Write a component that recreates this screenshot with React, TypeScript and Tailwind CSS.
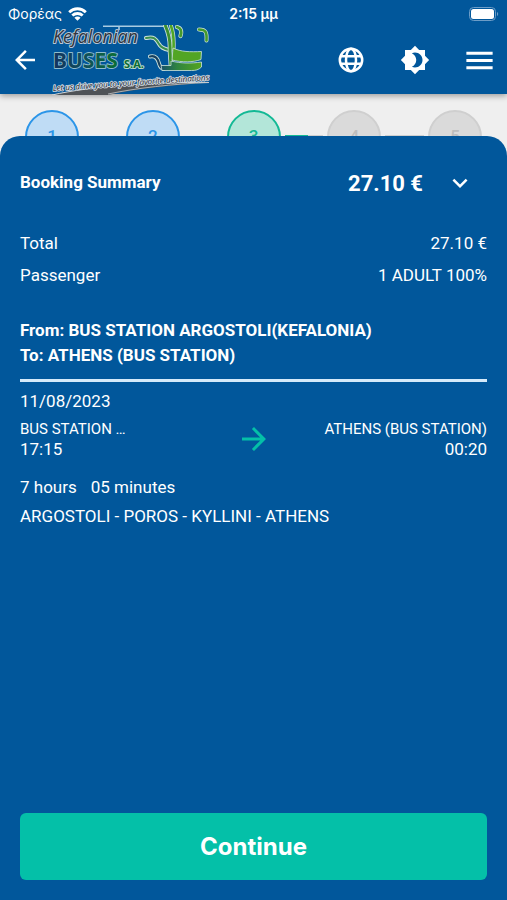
import React from "react";
import { MdArrowBack, MdArrowForward, MdBrightness4, MdKeyboardArrowDown, MdMenu } from "react-icons/md";

const steps = [
  { n: 1, circle: "border-[#2b95e8] bg-[#bfdcf5] text-[#2b95e8]", line: "bg-[#e3eef8]" },
  { n: 2, circle: "border-[#2b95e8] bg-[#bfdcf5] text-[#2b95e8]", line: "bg-[#e3eef8]" },
  { n: 3, circle: "border-[#13b995] bg-[#b3e6d9] text-[#13b995]", line: "bg-[linear-gradient(90deg,#13b995_60%,#cfcfcf_60%)]" },
  { n: 4, circle: "border-[#cfcfcf] bg-[#dadada] text-[#bdbdbd]", line: "bg-[#cfcfcf]" },
  { n: 5, circle: "border-[#cfcfcf] bg-[#dadada] text-[#bdbdbd]", line: "" },
];

function StatusBar() {
  return (
    <div className="grid grid-cols-3 items-center h-7 px-2 text-sm font-['Inter',sans-serif]">
      <div className="flex items-center gap-1.5">
        <span>Φορέας</span>
        <svg width="19" height="14" viewBox="0 0 19 14" fill="none" stroke="white" strokeWidth="2.8" aria-hidden="true">
          <path d="M1.2 5.2C5.8 0.6 13.2 0.6 17.8 5.2" />
          <path d="M4.3 8.6C7.2 5.8 11.8 5.8 14.7 8.6" />
          <path d="M9.5 13.8L6.4 10.8C8.2 9.2 10.8 9.2 12.6 10.8Z" fill="white" stroke="none" />
        </svg>
      </div>
      <span className="text-center font-semibold">2:15 μμ</span>
      <svg className="justify-self-end" width="30" height="14" viewBox="0 0 30 14" aria-hidden="true">
        <rect x="0.5" y="0.5" width="26" height="13" rx="4" fill="none" stroke="#6d9dc7" />
        <rect x="2" y="2" width="23" height="10" rx="2.5" fill="white" />
        <path d="M28 5v4c1.6-.6 1.6-3.4 0-4z" fill="#6d9dc7" />
      </svg>
    </div>
  );
}

function Logo() {
  return (
    <svg width="160" height="70" viewBox="0 0 160 70" role="img" aria-label="Kefalonian Buses">
      <defs>
        <linearGradient id="word" x1="0" x2="1">
          <stop offset="0" stopColor="#12335f" />
          <stop offset="0.5" stopColor="#10505a" />
          <stop offset="1" stopColor="#0b6e35" />
        </linearGradient>
        <linearGradient id="bus" x1="0" x2="1">
          <stop offset="0" stopColor="#17506a" />
          <stop offset="0.4" stopColor="#2f8440" />
          <stop offset="1" stopColor="#55a51f" />
        </linearGradient>
      </defs>

      {/* roof line */}
      <path d="M51 1.2H116" stroke="#a9cbe2" strokeWidth="1.6" fill="none" />
      <path d="M67 2v3" stroke="#a9cbe2" strokeWidth="1.6" />

      {/* windscreen, pillar and mirrors */}
      <g fill="none" strokeLinecap="round">
        <path d="M94 13c8-2 10 1 13 6 2 4 5 5 10 6" stroke="#cfe3dc" strokeWidth="4" />
        <path d="M94 13c8-2 10 1 13 6 2 4 5 5 10 6" stroke="#3a8f4c" strokeWidth="2" />
        <path d="M113.5 1c4 9 5 16 4.500 25l1 15" stroke="#cfe3dc" strokeWidth="4.600" />
        <path d="M119 1c3 8 3 14 2.500 23" stroke="#cfe3dc" strokeWidth="4" />
        <path d="M113.5 1c4 9 5 16 4.500 25l1 15" stroke="#3c9030" strokeWidth="3" />
        <path d="M119 1c3 8 3 14 2.500 23" stroke="#4fa526" strokeWidth="2.600" />
        <path d="M125 2c4 1 5 4 3.500 9" stroke="#cfe3dc" strokeWidth="4.200" />
        <path d="M125 2c4 1 5 4 3.500 9" stroke="#449a2c" strokeWidth="2.800" />
        <path d="M147 4.500c7 0 8 3 7.500 11" stroke="#cfe3dc" strokeWidth="4" />
        <path d="M147 4.500c7 0 8 3 7.500 11" stroke="#449a2c" strokeWidth="2.600" />
      </g>

      {/* bumper, then the two body panels over it */}
      <path d="M98 31.500c6-1.500 8 3 9 7 .8 3 2 5 5 5.500" stroke="#cfe3dc" strokeWidth="4" strokeLinecap="round" fill="none" />
      <path d="M98 31.500c6-1.500 8 3 9 7 .8 3 2 5 5 5.500" stroke="#16405f" strokeWidth="2.200" strokeLinecap="round" fill="none" />
      <path d="M109 40.500h10v-4.500c10 2.500 20 2.500 30.500 1v5c-3 3-6 3.500-10 3.500H110z" fill="url(#bus)" stroke="#cfe3dc" strokeWidth="0.800" />
      <path d="M121 23c8 4 17 4 28.500 3.500l-.5 8c-8 3-19 3-29 .5z" fill="#52a524" stroke="#cfe3dc" strokeWidth="0.800" />

      {/* road under the slogan */}
      <path d="M0 70C40 61 100 57 157 57.500C120 60 85 64 56 70z" fill="#4f5357" />
      <path d="M0 70C40 61 100 57 157 57.500" stroke="#d3d6d8" strokeWidth="1" fill="none" />
      <path d="M56 69C85 63 120 59 157 57.500" stroke="#c3c8cc" strokeWidth="0.800" fill="none" />

      <g paintOrder="stroke" strokeLinejoin="round">
        <text x="1" y="18" fontFamily="'Open Sans', sans-serif" fontStyle="italic" fontSize="18" fill="#30343c" stroke="#b5c6d6" strokeWidth="2">
          Kefalonian
        </text>
        <text x="1" y="43" fontFamily="'Noto Sans', sans-serif" fontWeight="700" fontSize="21" fill="url(#word)" stroke="#8fbccc" strokeWidth="1.800">
          BUSES
        </text>
        <text x="72" y="43" fontFamily="'Noto Sans', sans-serif" fontWeight="700" fontSize="11" fill="#0d6b35" stroke="#b9dcc8" strokeWidth="2">
          S.A.
        </text>
        <text x="1" y="66" transform="rotate(-4 1 66)" fontFamily="'Open Sans', sans-serif" fontStyle="italic" fontSize="8" fill="#1d242d" stroke="#cfd8e0" strokeWidth="1.800">
          Let us drive you to your favorite destinations
        </text>
      </g>
    </svg>
  );
}

function GlobeIcon() {
  return (
    <svg width="26" height="26" viewBox="0 0 26 26" fill="none" stroke="currentColor" strokeWidth="2.500" aria-hidden="true">
      <circle cx="13" cy="13" r="11.200" />
      <ellipse cx="13" cy="13" rx="5" ry="11.200" />
      <path d="M2.500 9.300h21M2.500 16.700h21" />
    </svg>
  );
}

function Header() {
  return (
    <header className="relative z-10 pb-0.5 bg-[#01579b] shadow-[0_2px_6px_rgba(0,0,0,0.35)]">
      <StatusBar />
      <div className="flex items-center h-16 px-2.5">
        <button aria-label="Back">
          <MdArrowBack size={30} />
        </button>
        {/* a little taller than the bar, so it tucks under the status bar */}
        <div className="ml-3 -my-1">
          <Logo />
        </div>
        <div className="ml-auto flex items-center">
          <button aria-label="Language" className="mr-9">
            <GlobeIcon />
          </button>
          <button aria-label="Theme" className="mr-8">
            <MdBrightness4 size={30} />
          </button>
          <button aria-label="Menu">
            <MdMenu size={35} />
          </button>
        </div>
      </div>
    </header>
  );
}

function Stepper() {
  return (
    <ol className="flex items-center pt-4 px-[25px]">
      {steps.map((step) => (
        <React.Fragment key={step.n}>
          <li className={`flex items-center justify-center size-[54px] shrink-0 rounded-full border-2 text-[17px] font-medium ${step.circle}`}>
            {step.n}
          </li>
          {step.line && <li aria-hidden="true" className={`h-1 flex-1 mx-1 ${step.line}`} />}
        </React.Fragment>
      ))}
    </ol>
  );
}

function BookingSummary() {
  return (
    <section className="relative flex flex-col flex-1 -mt-7 px-5 pt-7 pb-5 rounded-t-[20px] bg-[#01579b] text-[17px]">
      <div className="flex items-center h-[38px]">
        <h1 className="font-bold">Booking Summary</h1>
        <span className="ml-auto text-[22px] font-bold">27.10 €</span>
        <button aria-label="Collapse summary" className="ml-[22px] mr-3">
          <MdKeyboardArrowDown size={30} />
        </button>
      </div>

      <dl className="mt-[26px]">
        <div className="flex items-center justify-between h-8">
          <dt>Total</dt>
          <dd>27.10 €</dd>
        </div>
        <div className="flex items-center justify-between h-8">
          <dt>Passenger</dt>
          <dd>1 ADULT 100%</dd>
        </div>
      </dl>

      <div className="mt-[26px] leading-[25px] font-bold">
        <p>From: BUS STATION ARGOSTOLI(KEFALONIA)</p>
        <p>To: ATHENS (BUS STATION)</p>
      </div>

      <hr className="mt-[11px] border-0 h-[3px] bg-[#d5eafa]" />

      <p className="mt-[7px] leading-6">11/08/2023</p>
      <div className="mt-1.5 grid grid-cols-[1fr_auto_1fr] items-center leading-5">
        <div>
          <p className="text-[15px] leading-5">BUS STATION …</p>
          <p>17:15</p>
        </div>
        <MdArrowForward size={36} className="text-[#04c0a8]" />
        <div className="text-right">
          <p className="text-[15px] leading-5">ATHENS (BUS STATION)</p>
          <p>00:20</p>
        </div>
      </div>
      <p className="mt-4 leading-6 flex gap-3.5">
        <span>7 hours</span>
        <span>05 minutes</span>
      </p>
      <p className="mt-[5px] leading-6">ARGOSTOLI - POROS - KYLLINI - ATHENS</p>

      <button className="mt-auto h-[67px] rounded-md bg-[#04c0a8] text-2xl font-bold font-['Inter',sans-serif]">
        Continue
      </button>
    </section>
  );
}

export default function App() {
  return (
    <div className="min-h-screen flex flex-col bg-[#efefef] text-white font-['Roboto',sans-serif]">
      <Header />
      <Stepper />
      <BookingSummary />
    </div>
  );
}
